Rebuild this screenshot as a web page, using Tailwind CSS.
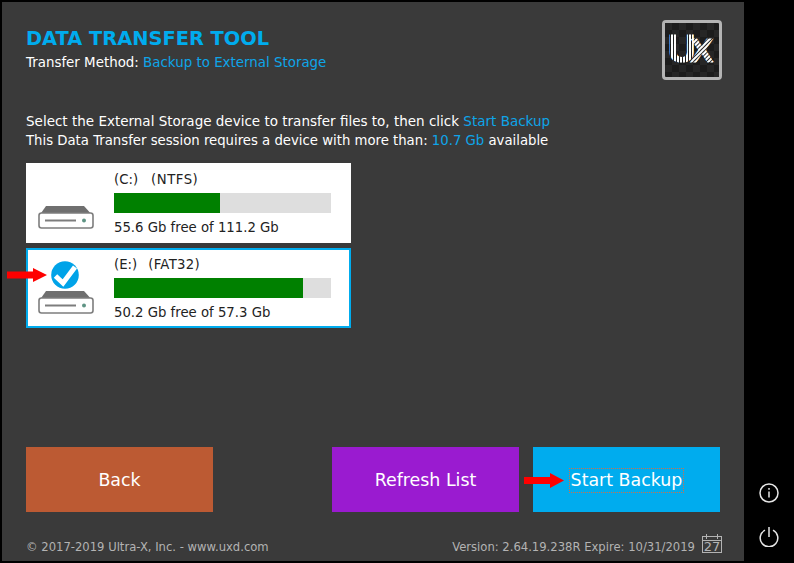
<!DOCTYPE html>
<html lang="en">
<head>
    <meta charset="UTF-8">
    <title>Data Transfer Tool</title>
    <script src="https://cdn.jsdelivr.net/npm/@tailwindcss/browser@4"></script>
</head>
<body class="bg-black font-['DejaVu_Sans',sans-serif] overflow-hidden">
    <div class="flex w-[794px] h-[563px] bg-black">
        <!-- main panel -->
        <main class="relative flex flex-col w-[742px] h-[559px] mt-[2px] ml-[2px] bg-[#3a3a3a] pl-[24px] pr-[24px]">
            <header class="flex justify-between pt-[18px] h-[98px]">
                <div>
                    <h1 class="text-[19.4px] leading-[38px] font-bold text-[#00acee]">DATA TRANSFER TOOL</h1>
                    <p class="text-[13.4px] leading-[16px] text-white -mt-[3px]">Transfer Method: <span class="text-[#0ea5e9]">Backup to External Storage</span></p>
                </div>
                <div class="mr-[-2px] w-[60px] h-[60px] rounded-[4px] border-[3px] border-[#b4b4b4] bg-[#1c1c1c] flex items-center justify-center">
                    <svg width="54" height="54" viewBox="0 0 54 54">
                        <defs>
                            <pattern id="check" width="14" height="14" patternUnits="userSpaceOnUse"><rect width="7" height="7" fill="#262626"/><rect x="7" y="7" width="7" height="7" fill="#262626"/></pattern>
                            <pattern id="ustripe" width="3" height="3" patternUnits="userSpaceOnUse"><rect width="2" height="3" fill="#fff"/></pattern>
                            <pattern id="xstripe" width="3" height="3" patternUnits="userSpaceOnUse" patternTransform="rotate(45)"><rect width="2" height="3" fill="#fff"/></pattern>
                        </defs>
                        <rect width="54" height="54" fill="url(#check)"/>
                        <text x="3" y="39" font-family="Liberation Sans, sans-serif" font-weight="700" stroke-width="1.2"><tspan font-size="38" fill="url(#ustripe)" stroke="url(#ustripe)">U</tspan><tspan dx="-5" font-size="34" fill="url(#xstripe)" stroke="url(#xstripe)">X</tspan></text>
                    </svg>
                </div>
            </header>

            <section class="mt-[11px] leading-[20px] text-white">
                <p class="text-[13.5px]">Select the External Storage device to transfer files to, then click <span class="text-[#0ea5e9]">Start Backup</span></p>
                <p class="text-[13.25px]">This Data Transfer session requires a device with more than: <span class="text-[#0ea5e9]">10.7 Gb</span> available</p>
            </section>

            <!-- drive list -->
            <section class="mt-[12px] flex flex-col gap-[5px] w-[325px] text-[13.25px] text-[#222]">
                <div class="flex h-[80px] bg-white">
                    <div class="w-[88px] flex items-end pl-[12px] pb-[14px]">
                        <svg width="56" height="24" viewBox="0 0 56 24" fill="none">
                            <path d="M8 1h38l9 10H1z" fill="#6f6f6f"/>
                            <rect x="1" y="8" width="54" height="15" rx="2.5" fill="#fff" stroke="#7d7d7d" stroke-width="1.6"/>
                            <path d="M7 15.5h31" stroke="#7d7d7d" stroke-width="2"/>
                            <circle cx="46" cy="15.5" r="2" fill="#5f9484"/>
                        </svg>
                    </div>
                    <div class="flex-1 pt-[8px]">
                        <p class="leading-[17px]">(C:)<span class="ml-[13px] tracking-[0.5px]">(NTFS)</span></p>
                        <div class="mt-[5px] w-[217px] h-[20px] bg-[#dedede]"><div class="h-full bg-[#008000]" style="width:49%"></div></div>
                        <p class="mt-[6px] leading-[17px]">55.6 Gb free of 111.2 Gb</p>
                    </div>
                </div>
                <div class="relative flex h-[80px] bg-white border-2 border-[#00acee]">
                    <div class="w-[86px] relative flex items-end pl-[10px] pb-[12px]">
                        <svg width="56" height="24" viewBox="0 0 56 24" fill="none">
                            <path d="M8 1h38l9 10H1z" fill="#6f6f6f"/>
                            <rect x="1" y="8" width="54" height="15" rx="2.5" fill="#fff" stroke="#7d7d7d" stroke-width="1.6"/>
                            <path d="M7 15.5h31" stroke="#7d7d7d" stroke-width="2"/>
                            <circle cx="46" cy="15.5" r="2" fill="#5f9484"/>
                        </svg>
                        <svg class="absolute left-[23px] top-[11px]" width="28" height="28" viewBox="0 0 28 28">
                            <circle cx="14" cy="14" r="13.8" fill="#00a3e8"/>
                            <path d="M4.5 15l7.5 7L24 6" fill="none" stroke="#fff" stroke-width="5"/>
                        </svg>
                    </div>
                    <div class="flex-1 pt-[6px]">
                        <p class="leading-[17px]">(E:)<span class="ml-[11px] tracking-[0.3px]">(FAT32)</span></p>
                        <div class="mt-[5px] w-[217px] h-[20px] bg-[#dedede]"><div class="h-full bg-[#008000]" style="width:87%"></div></div>
                        <p class="mt-[6px] leading-[17px]">50.2 Gb free of 57.3 Gb</p>
                    </div>
                    <svg class="absolute left-[-21px] top-[18px]" width="40" height="14" viewBox="0 0 40 14"><path d="M0 3.5h26V0l14 7-14 7v-3.5H0z" fill="#f00"/></svg>
                </div>
            </section>

            <!-- buttons -->
            <div class="absolute left-[24px] top-[445px] w-[694px] flex text-[17.4px] text-white">
                <button class="w-[187px] h-[65px] pt-[1px] bg-[#bc5a33]">Back</button>
                <button class="ml-[119px] w-[187px] h-[65px] pt-[1px] bg-[#9a1bd0]">Refresh List</button>
                <button class="relative ml-[14px] w-[187px] h-[65px] pt-[1px] bg-[#00acee]">
                    <span class="inline-block outline-1 outline-dotted outline-[#d0704a] px-[1px] leading-[23px]">Start Backup</span>
                    <svg class="absolute left-[-9px] top-[26px]" width="40" height="15" viewBox="0 0 40 15"><path d="M0 4h26V0l14 7.5-14 7.5v-4H0z" fill="#f00"/></svg>
                </button>
            </div>

            <footer class="absolute left-[24px] top-[531px] w-[696px] flex justify-between text-[11.6px] leading-[28px] text-[#b3b3b3]">
                <span>© 2017-2019 Ultra-X, Inc. - www.uxd.com</span>
                <span class="flex items-center gap-[7px]">Version: 2.64.19.238R Expire: 10/31/2019
                    <span class="relative -mt-[5px] w-[20px] h-[17px] border border-[#b3b3b3] text-[13px] leading-[12px] text-center">
                        <span class="absolute left-[3px] top-[-3px] w-[1px] h-[5px] bg-[#b3b3b3]"></span>
                        <span class="absolute right-[3px] top-[-3px] w-[1px] h-[5px] bg-[#b3b3b3]"></span>
                        <span class="block mt-[3px] border-t border-[#b3b3b3]">27</span>
                    </span>
                </span>
            </footer>
        </main>

        <!-- right rail icons -->
        <aside class="flex flex-col items-center w-[50px] pt-[483px] gap-[24px]">
            <svg width="20" height="20" viewBox="0 0 20 20" fill="none" stroke="#e6e6e6" stroke-width="1.5"><circle cx="10" cy="10" r="9"/><path d="M10 8.5v6"/><path d="M10 5v1.7"/></svg>
            <svg width="20" height="20" viewBox="0 0 20 20" fill="none" stroke="#e6e6e6" stroke-width="1.5"><path d="M6 3.2a8.8 8.8 0 1 0 8 0"/><path d="M10 0v10"/></svg>
        </aside>
    </div>
</body>
</html>
